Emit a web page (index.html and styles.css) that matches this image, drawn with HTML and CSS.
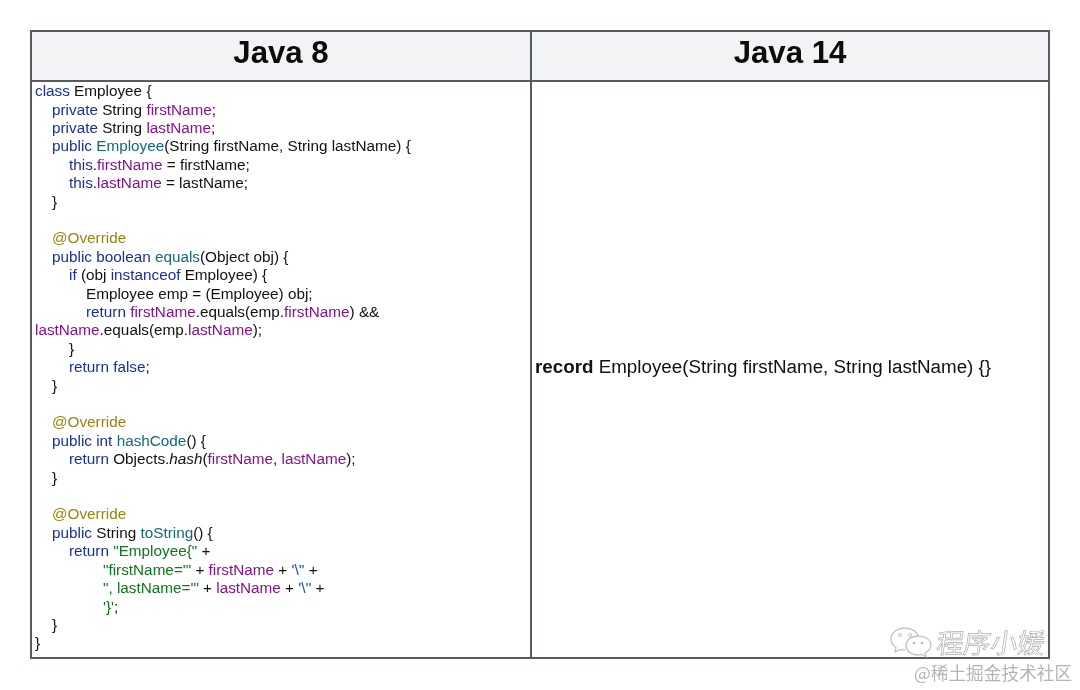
FILE: index.html
```html
<!DOCTYPE html>
<html lang="zh">
<head>
<meta charset="utf-8">
<title>Java 8 vs Java 14</title>
<link rel="stylesheet" href="styles.css">
</head>
<body>
<div class="page">
  <div class="table">
    <div class="head left">Java 8</div>
    <div class="head">Java 14</div>
    <div class="code">
      <div class="l"><span class="k">class</span> Employee {</div>
      <div class="l i1"><span class="k">private</span> String <span class="f">firstName</span>;</div>
      <div class="l i1"><span class="k">private</span> String <span class="f">lastName</span>;</div>
      <div class="l i1"><span class="k">public</span> <span class="m">Employee</span>(String firstName, String lastName) {</div>
      <div class="l i2"><span class="k">this</span>.<span class="f">firstName</span> = firstName;</div>
      <div class="l i2"><span class="k">this</span>.<span class="f">lastName</span> = lastName;</div>
      <div class="l i1">}</div>
      <div class="l"></div>
      <div class="l i1"><span class="a">@Override</span></div>
      <div class="l i1"><span class="k">public boolean</span> <span class="m">equals</span>(Object obj) {</div>
      <div class="l i2"><span class="k">if</span> (obj <span class="k">instanceof</span> Employee) {</div>
      <div class="l i3">Employee emp = (Employee) obj;</div>
      <div class="l i3"><span class="k">return</span> <span class="f">firstName</span>.equals(emp.<span class="f">firstName</span>) &amp;&amp;</div>
      <div class="l"><span class="f">lastName</span>.equals(emp.<span class="f">lastName</span>);</div>
      <div class="l i2">}</div>
      <div class="l i2"><span class="k">return false</span>;</div>
      <div class="l i1">}</div>
      <div class="l"></div>
      <div class="l i1"><span class="a">@Override</span></div>
      <div class="l i1"><span class="k">public int</span> <span class="m">hashCode</span>() {</div>
      <div class="l i2"><span class="k">return</span> Objects.<em>hash</em>(<span class="f">firstName</span>, <span class="f">lastName</span>);</div>
      <div class="l i1">}</div>
      <div class="l"></div>
      <div class="l i1"><span class="a">@Override</span></div>
      <div class="l i1"><span class="k">public</span> String <span class="m">toString</span>() {</div>
      <div class="l i2"><span class="k">return</span> <span class="s">"Employee{"</span> +</div>
      <div class="l i4"><span class="s">"firstName='"</span> + <span class="f">firstName</span> + <span class="c">'\''</span> +</div>
      <div class="l i4"><span class="s">", lastName='"</span> + <span class="f">lastName</span> + <span class="c">'\''</span> +</div>
      <div class="l i4"><span class="s">'}'</span>;</div>
      <div class="l i1">}</div>
      <div class="l">}</div>
    </div>
    <div class="record"><div><strong>record</strong> Employee(String firstName, String lastName) {}</div></div>
  </div>
  <div class="mark">
    <svg class="wx" viewBox="0 0 46 34" width="46" height="34" aria-hidden="true">
      <path d="M17 3C9 3 3 8 3 14c0 3.600 2 6.500 5 8.500L7 27l5-2.600c1.500.4 3 .6 5 .6" fill="#fff" stroke="#c4c4c4" stroke-width="1.300"/>
      <path d="M17 3c7 0 12.500 4 13.800 9" fill="none" stroke="#c4c4c4" stroke-width="1.300"/>
      <circle cx="12" cy="10" r="1.500" fill="none" stroke="#c4c4c4"/>
      <circle cx="22" cy="10" r="1.500" fill="none" stroke="#c4c4c4"/>
      <g transform="translate(0 -2)">
        <path d="M30 13c-7 0-12 4.300-12 9.500S23 32 30 32c1.500 0 2.700-.2 4-.6l4 2.300-1-3.700c3-1.800 6-4.700 6-8 0-5.200-6-9-13-9z" fill="#fff" stroke="#c4c4c4" stroke-width="1.300"/>
        <circle cx="26" cy="20" r="1.300" fill="#bbb"/>
        <circle cx="34" cy="20" r="1.300" fill="#bbb"/>
      </g>
    </svg>
    <span class="mark-text">程序小媛</span>
  </div>
  <div class="credit">@稀土掘金技术社区</div>
</div>
</body>
</html>
```
FILE: styles.css
```css
html, body {
  margin: 0;
  padding: 0;
  background: #fff;
}
.page {
  position: relative;
  width: 1080px;
  height: 690px;
  overflow: hidden;
  padding: 30px 0 0 30px;
  box-sizing: border-box;
  font-family: "Liberation Sans", Arial, sans-serif;
  color: #111;
}
.table {
  display: grid;
  grid-template-columns: 500px 516px;
  grid-template-rows: 50px 575px;
  width: 1020px;
  height: 629px;
  box-sizing: border-box;
  border: 2px solid #555a63;
  filter: blur(0.35px);
}
.head {
  background: #f2f3f5;
  border-bottom: 2px solid #555a63;
  font-size: 31.200px;
  font-weight: 700;
  text-align: center;
  line-height: 41px;
  color: #0c0c0c;
}
.left {
  border-right: 2px solid #555a63;
}
.code {
  border-right: 2px solid #555a63;
  padding: 0.200px 0 0 3px;
  font-size: 15.300px;
  line-height: 18.400px;
}
.l {
  min-height: 18.400px;
  white-space: nowrap;
}
.i1 { padding-left: 17px; }
.i2 { padding-left: 34px; }
.i3 { padding-left: 51px; }
.i4 { padding-left: 68px; }
.k { color: #1a2ea0; }
.f { color: #86128f; }
.m { color: #136a78; }
.a { color: #9a8510; }
.s { color: #12741e; }
.c { color: #1c4fa8; }
.record {
  display: flex;
  align-items: center;
  padding: 0 0 5px 3px;
  font-size: 18.800px;
}
.mark {
  position: absolute;
  left: 888px;
  top: 624px;
  display: flex;
  align-items: center;
  gap: 3px;
  filter: blur(0.4px);
}
.mark-text {
  display: inline-block;
  font-family: "Noto Sans CJK SC", sans-serif;
  font-size: 27px;
  line-height: 36px;
  color: #fff;
  -webkit-text-stroke: 0.700px #adadad;
  transform: skewX(-8deg);
}
.credit {
  position: absolute;
  left: 914px;
  top: 661px;
  font-family: "Noto Sans CJK SC", sans-serif;
  font-size: 17.700px;
  line-height: 22px;
  white-space: nowrap;
  color: #b4b4b4;
  filter: blur(0.4px);
}
```
